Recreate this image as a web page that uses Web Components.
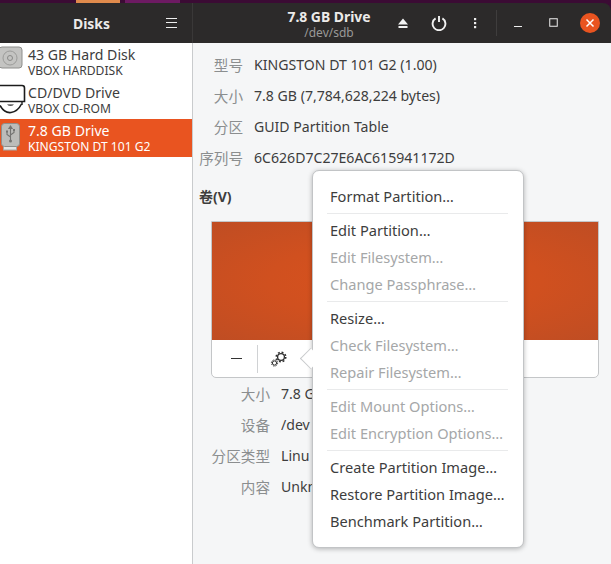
<!DOCTYPE html>
<html>
<head>
<meta charset="utf-8">
<style>
  html, body { margin: 0; height: 100%; background: #f5f6f7; overflow: hidden; }
  body { font-family: "Noto Sans", "Noto Sans CJK SC", sans-serif; }
</style>
</head>
<body>
<disk-app>
  <disk-row slot="side" title="43 GB Hard Disk" sub="VBOX HARDDISK" icon="hdd"></disk-row>
  <disk-row slot="side" title="CD/DVD Drive" sub="VBOX CD-ROM" icon="cd"></disk-row>
  <disk-row slot="side" title="7.8 GB Drive" sub="KINGSTON DT 101 G2" icon="usb" selected></disk-row>

  <info-row label="型号" width="44">KINGSTON DT 101 G2 (1.00)</info-row>
  <info-row label="大小" width="44">7.8 GB (7,784,628,224 bytes)</info-row>
  <info-row label="分区" width="44">GUID Partition Table</info-row>
  <info-row label="序列号" width="44">6C626D7C27E6AC615941172D</info-row>

  <volume-panel slot="volume"></volume-panel>

  <!-- the popover covers the rest of these values: only what shows is written -->
  <info-row slot="vol-info" label="大小" width="59" clip="31">7.8 G</info-row>
  <info-row slot="vol-info" label="设备" width="59" clip="31">/dev</info-row>
  <info-row slot="vol-info" label="分区类型" width="59" clip="31">Linu</info-row>
  <info-row slot="vol-info" label="内容" width="59" clip="31">Unkn</info-row>

  <popover-menu slot="menu">
    <menu-item>Format Partition…</menu-item>
    <menu-sep></menu-sep>
    <menu-item>Edit Partition…</menu-item>
    <menu-item disabled>Edit Filesystem…</menu-item>
    <menu-item disabled>Change Passphrase…</menu-item>
    <menu-sep></menu-sep>
    <menu-item>Resize…</menu-item>
    <menu-item disabled>Check Filesystem…</menu-item>
    <menu-item disabled>Repair Filesystem…</menu-item>
    <menu-sep></menu-sep>
    <menu-item disabled>Edit Mount Options…</menu-item>
    <menu-item disabled>Edit Encryption Options…</menu-item>
    <menu-sep></menu-sep>
    <menu-item>Create Partition Image…</menu-item>
    <menu-item>Restore Partition Image…</menu-item>
    <menu-item>Benchmark Partition…</menu-item>
  </popover-menu>
</disk-app>

<script>
(function () {
  var FONT = '"Noto Sans", "Noto Sans CJK SC", sans-serif';

  // Sidebar drive icons, drawn to the reference's size
  var ICONS = {
    hdd: '<svg width="26" height="30" viewBox="0 0 26 30"><rect x="-1" y="1" width="23" height="21" rx="3" fill="#c4c4c2" stroke="#8e8e8c"/><circle cx="10" cy="12" r="7" fill="none" stroke="#9c9c9a"/><circle cx="10" cy="12" r="2.5" fill="none" stroke="#8a8a88"/></svg>',
    cd: '<svg width="26" height="30" viewBox="0 0 26 30"><path d="M-1 1.5H22a2.5 2.5 0 0 1 2.5 2.5V17.5H-1" fill="#fff" stroke="#1c1c1c" stroke-width="1.6"/><path d="M0 21.5C3 27 7 29 11 28.5C15 28 19 25 21.5 20" fill="none" stroke="#1c1c1c" stroke-width="1.6"/><path d="M7 20.5a4 2.5 0 0 0 7 0z" fill="#1c1c1c"/><path d="M22 18v3" stroke="#1c1c1c" stroke-width="1.4"/></svg>',
    usb: '<svg width="26" height="30" viewBox="0 0 26 30"><rect x="3.5" y="22" width="13" height="6" fill="#e4e4e2" stroke="#a8a8a6"/><rect x="1.5" y="1.5" width="18" height="23" rx="3" fill="#bcbcb9" stroke="#8f8f8c"/><path d="M10.5 4v15M10.5 4l-1.6 2.5h3.2zM10.5 15l-3.5-2.5V10M10.5 13l3.5-2.5V8.5" fill="none" stroke="#747472" stroke-width="1.1"/><circle cx="10.5" cy="19" r="1.5" fill="#747472"/><rect x="6" y="8.5" width="2" height="2" fill="#747472"/><rect x="13" y="7" width="2" height="2" fill="#747472"/></svg>'
  };

  customElements.define('disk-app', class extends HTMLElement {
    connectedCallback() {
      var root = this.attachShadow({ mode: 'open' });
      root.innerHTML = '<style>'
        + ':host{display:flex;flex-direction:column;width:611px;height:564px;position:relative;overflow:hidden;font-family:' + FONT + ';'
        + 'background:linear-gradient(90deg,#3b0b34 76px,#e08a4c 76px,#e08a4c 120px,#3b0b34 120px,#3b0b34 125px,#6d1a62 125px,#6d1a62 180px,#3b0b34 180px)}'
        + '.head{flex:none;height:40px;margin-top:3px;background:#2c2a2a;border-top-right-radius:8px;display:flex;color:#fff}'
        + '.head-side{flex:none;width:193px;box-sizing:border-box;border-right:1px solid #3a3838;display:flex;align-items:center;position:relative;justify-content:center}'
        + '.head-side b{font-size:13.9px;font-weight:700;color:#ecebe9;margin-right:9px}'
        + '.burger{position:absolute;left:166px;top:15px;width:11px;height:8px;border-top:1px solid #eee;border-bottom:1px solid #eee}'
        + '.burger::after{content:"";display:block;height:1px;margin-top:3px;background:#eee}'
        + '.head-main{flex:1;display:flex;align-items:center;min-width:0}'
        + '.title{width:192px;flex:none;box-sizing:border-box;text-align:center;padding:2px 0 0 80px}'
        + '.title b{display:block;font-size:13.9px;line-height:16px;font-weight:700;color:#ecebe9}'
        + '.title span{display:block;font-size:12px;line-height:15px;color:#9a9998}'
        + '.tools{display:flex;align-items:center;flex:1;height:100%}'
        + '.btn{flex:none;width:36px;height:40px;display:flex;align-items:center;justify-content:center}'
        + '.vsep{flex:none;width:1px;height:26px;background:#3f3d3d;margin:0 3px}'
        + '.close i{display:flex;width:20px;height:20px;border-radius:50%;background:#e95420;align-items:center;justify-content:center}'
        + '.body{flex:1;display:flex;min-height:0}'
        + '.side{flex:none;width:193px;box-sizing:border-box;background:#fff;border-right:1px solid #c9cbcd;height:100%}'
        + '.main{flex:1;background:#f5f6f7;padding:6px 12px 0 6px;min-width:0}'
        + '.vol-title{font-size:14px;font-weight:700;color:#3d3d3d;line-height:20px;margin:14px 0 14px}'
        + '.vol-wrap{margin-left:12px}'
        + '</style>'
        + '<div class="head">'
        + '<div class="head-side"><b>Disks</b><div class="burger"></div></div>'
        + '<div class="head-main"><div class="title"><b>7.8 GB Drive</b><span>/dev/sdb</span></div>'
        + '<div class="tools">'
        + '<div class="btn"><svg width="14" height="14" viewBox="0 0 14 14"><path d="M7 2.5L12 8.5H2z" fill="#f2f2f2"/><rect x="2.5" y="10" width="9" height="2" fill="#f2f2f2"/></svg></div>'
        + '<div class="btn"><svg width="16" height="16" viewBox="0 0 16 16"><path d="M4.6 3.4a6.4 6.4 0 1 0 6.8 0M8 1v6" fill="none" stroke="#f2f2f2" stroke-width="1.9"/></svg></div>'
        + '<div class="btn"><svg width="4" height="14" viewBox="0 0 4 14"><rect x="1" y="2" width="2.2" height="2.2" fill="#eee"/><rect x="1" y="6" width="2.2" height="2.2" fill="#eee"/><rect x="1" y="10" width="2.2" height="2.2" fill="#eee"/></svg></div>'
        + '<div class="vsep"></div>'
        + '<div class="btn"><svg width="10" height="10" viewBox="0 0 10 10"><rect x="1" y="8" width="8" height="1" fill="#eee"/></svg></div>'
        + '<div class="btn"><svg width="10" height="10" viewBox="0 0 10 10"><rect x=".75" y=".75" width="7.5" height="7.5" fill="none" stroke="#eee" stroke-width="1"/></svg></div>'
        + '<div class="btn close"><i><svg width="10" height="10" viewBox="0 0 10 10"><path d="M1.5 1.5l7 7M8.5 1.5l-7 7" stroke="#fff" stroke-width="1.5"/></svg></i></div>'
        + '</div></div></div>'
        + '<div class="body"><div class="side"><slot name="side"></slot></div>'
        + '<div class="main"><slot></slot>'
        + '<div class="vol-title">卷(V)</div>'
        + '<div class="vol-wrap"><slot name="volume"></slot><div class="vol-info"><slot name="vol-info"></slot></div></div>'
        + '</div></div><slot name="menu"></slot>';
    }
  });

  customElements.define('disk-row', class extends HTMLElement {
    connectedCallback() {
      var root = this.attachShadow({ mode: 'open' });
      root.innerHTML = '<style>'
        + ':host{display:flex;height:38px;overflow:hidden;color:#3d3d3d}'
        + ':host([selected]){background:#e95420;color:#fff}'
        + '.ic{flex:none;width:26px;height:38px;padding-top:3px;box-sizing:border-box;line-height:0;margin-right:2px}'
        + '.t{font-size:14.1px;line-height:17px;padding-top:3px;white-space:nowrap}'
        + '.s{font-size:12.1px;line-height:15px;white-space:nowrap}'
        + '</style><div class="ic">' + ICONS[this.getAttribute('icon')] + '</div>'
        + '<div><div class="t">' + this.getAttribute('title') + '</div><div class="s">' + this.getAttribute('sub') + '</div></div>';
    }
  });

  customElements.define('info-row', class extends HTMLElement {
    connectedCallback() {
      var root = this.attachShadow({ mode: 'open' });
      var clip = this.getAttribute('clip');
      root.innerHTML = '<style>'
        + ':host{display:flex;height:31px;align-items:center;white-space:nowrap;font-size:14.1px}'
        + '.l{flex:none;text-align:right;color:#8b8e8f;margin-right:11px;font-size:14.6px}'
        + '.v{color:#3d3d3d;overflow:hidden}'
        + '</style><div class="l" style="width:' + this.getAttribute('width') + 'px">' + this.getAttribute('label') + '</div>'
        + '<div class="v"' + (clip ? ' style="width:' + clip + 'px"' : '') + '><slot></slot></div>';
    }
  });

  customElements.define('volume-panel', class extends HTMLElement {
    connectedCallback() {
      var root = this.attachShadow({ mode: 'open' });
      root.innerHTML = '<style>'
        + ':host{display:block;width:388px;height:157px;box-sizing:border-box;border:1px solid #c4c6c8;border-radius:0 0 5px 5px;background:#fff}'
        + '.map{height:118px;background:radial-gradient(ellipse at 50% 50%,#da521d 0%,#d0501f 50%,#bf4d23 100%)}'
        + '.bar{height:37px;display:flex;align-items:center}'
        + '.b{flex:none;width:45px;height:28px;box-sizing:border-box;display:flex;align-items:center;justify-content:center}'
        + '.s{flex:none;width:1px;height:28px;background:#d0d2d4}'
        + '</style><div class="map"></div><div class="bar">'
        + '<div class="b" style="padding-left:3px"><svg width="11" height="3" viewBox="0 0 11 3"><rect y="1" width="11" height="1" fill="#333"/></svg></div><div class="s"></div>'
        + '<div class="b" style="width:42px"><svg width="18" height="18" viewBox="0 0 18 18"><g fill="none" stroke="#2e2e2e"><circle cx="11" cy="7" r="3.4" stroke-width="1.3"/><circle cx="11" cy="7" r="4.8" stroke-width="1.5" stroke-dasharray="1.9 1.87"/><circle cx="4.5" cy="13" r="2.1" stroke-width="1"/><circle cx="4.5" cy="13" r="3.1" stroke-width="1" stroke-dasharray="1.3 1.13"/></g></svg></div>'
        + '</div>';
    }
  });

  customElements.define('popover-menu', class extends HTMLElement {
    connectedCallback() {
      var root = this.attachShadow({ mode: 'open' });
      root.innerHTML = '<style>'
        + ':host{position:absolute;left:312px;top:170px;width:212px;height:378px;box-sizing:border-box;background:#fff;border:1px solid #c2c4c6;border-radius:7px;box-shadow:0 1px 5px rgba(0,0,0,.28);padding:12px 8px 0 8px}'
        + '.arrow{position:absolute;left:-11px;top:180px;width:14px;height:14px;margin-left:1px;background:#fff;border-left:1px solid #c8cacc;border-bottom:1px solid #c8cacc;transform:rotate(45deg)}'
        + '.mask{position:absolute;left:0;top:170px;width:5px;height:36px;background:#fff}'
        + '</style><div class="arrow"></div><div class="mask"></div><slot></slot>';
    }
  });

  customElements.define('menu-item', class extends HTMLElement {
    connectedCallback() {
      var root = this.attachShadow({ mode: 'open' });
      root.innerHTML = '<style>'
        + ':host{display:block;height:27px;line-height:27px;padding-left:9px;font-size:14.6px;color:#3d3d3d;white-space:nowrap}'
        + ':host([disabled]){color:#a5a7a8}'
        + '</style><slot></slot>';
    }
  });

  customElements.define('menu-sep', class extends HTMLElement {
    connectedCallback() {
      var root = this.attachShadow({ mode: 'open' });
      root.innerHTML = '<style>:host{display:block;height:1px;margin:3px 7px 3px 6px;background:#e9eaeb}</style>';
    }
  });
})();
</script>
</body>
</html>
